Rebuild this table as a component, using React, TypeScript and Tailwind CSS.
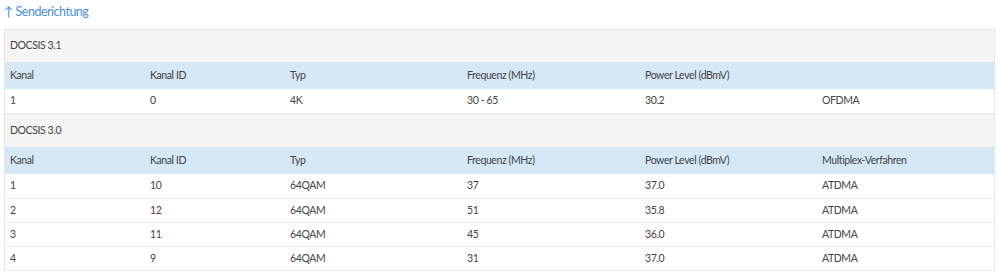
const cols = 'grid grid-cols-[140px_140px_177px_178px_177px_1fr]';

const headers = ['Kanal', 'Kanal ID', 'Typ', 'Frequenz (MHz)', 'Power Level (dBmV)', 'Multiplex-Verfahren'];

const sections = [
  {
    title: 'DOCSIS 3.1',
    headers: ['Kanal', 'Kanal ID', 'Typ', 'Frequenz (MHz)', 'Power Level (dBmV)', ''],
    rows: [['1', '0', '4K', '30 - 65', '30.2', 'OFDMA']],
  },
  {
    title: 'DOCSIS 3.0',
    headers,
    rows: [
      ['1', '10', '64QAM', '37', '37.0', 'ATDMA'],
      ['2', '12', '64QAM', '51', '35.8', 'ATDMA'],
      ['3', '11', '64QAM', '45', '36.0', 'ATDMA'],
      ['4', '9', '64QAM', '31', '37.0', 'ATDMA'],
    ],
  },
];

export default function App() {
  return (
    <div className="w-[999px] h-[272px] bg-white px-1 text-[#444] font-['Lato','Liberation_Sans',sans-serif] text-[10.5px] tracking-[-0.4px]">
      <div className="h-[29px] pt-[3px]">
        <a href="#" className="text-[12.5px] tracking-[-0.5px] text-[#4a90dc] leading-[18px]">
          ↑ Senderichtung
        </a>
      </div>
      <div className="w-[991px] border border-[#e6e6e6]">
        {sections.map((s, si) => (
          <div key={s.title} className={si > 0 ? 'border-t-2 border-[#ececec]' : ''}>
            <div className="h-[32px] flex items-center px-[5px] bg-[#f5f5f3]">{s.title}</div>
            <div className={`${cols} h-[27px] items-center bg-[#d6e7f6]`}>
              {s.headers.map((h, i) => (
                <div key={i} className="px-[5px]">{h}</div>
              ))}
            </div>
            {s.rows.map((r, ri) => (
              <div
                key={ri}
                className={`${cols} h-[24px] items-center ${ri > 0 ? 'border-t border-[#e8e8e8]' : ''}`}
              >
                {r.map((c, i) => (
                  <div key={i} className="px-[5px]">{c}</div>
                ))}
              </div>
            ))}
          </div>
        ))}
      </div>
    </div>
  );
}
